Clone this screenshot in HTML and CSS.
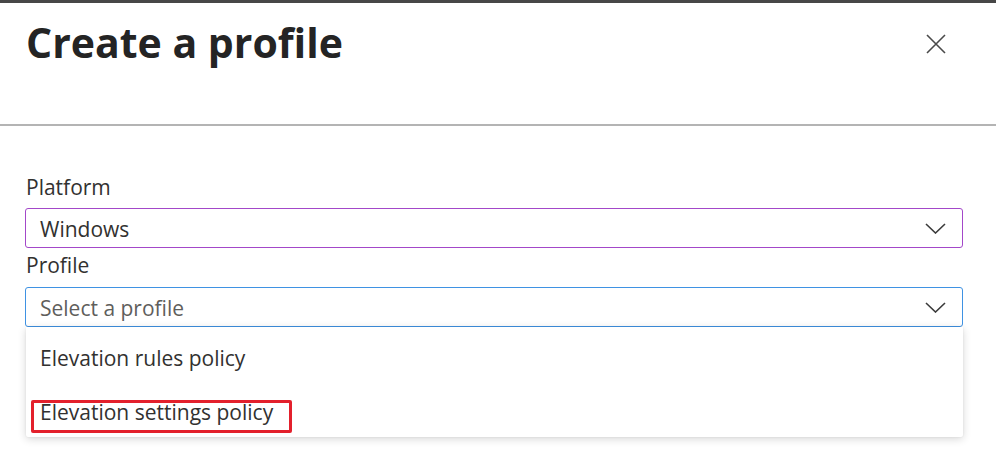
FILE: index.html
```html
<!DOCTYPE html>
<html lang="en">
<head>
<meta charset="utf-8">
<title>Create a profile</title>
<link rel="stylesheet" href="styles.css">
</head>
<body>
<div class="topbar"></div>
<header class="header">
  <h1 class="title">Create a profile</h1>
  <button class="close" aria-label="Close">
    <svg width="20" height="20" viewBox="0 0 20 20"><path d="M1 1 L19 19 M19 1 L1 19" stroke="#4a4a4a" stroke-width="1.6" fill="none"/></svg>
  </button>
</header>
<main class="content">
  <label class="label">Platform</label>
  <div class="select select-platform">
    <span class="value">Windows</span>
    <svg class="chev" width="21" height="11" viewBox="0 0 21 11"><path d="M1 1 L10.5 10 L20 1" stroke="#3b3b3b" stroke-width="1.6" fill="none"/></svg>
  </div>
  <label class="label label-profile">Profile</label>
  <div class="field">
    <div class="select select-profile">
      <span class="value placeholder">Select a profile</span>
      <svg class="chev" width="21" height="11" viewBox="0 0 21 11"><path d="M1 1 L10.5 10 L20 1" stroke="#3b3b3b" stroke-width="1.6" fill="none"/></svg>
    </div>
    <ul class="menu">
      <li class="item">Elevation rules policy</li>
      <li class="item item-marked">Elevation settings policy<span class="mark"></span></li>
    </ul>
  </div>
</main>
</body>
</html>
```
FILE: styles.css
```css
* { box-sizing: border-box; }
html, body { margin: 0; padding: 0; background: #ffffff; }
body {
  font-family: "Open Sans", "Noto Sans", "Liberation Sans", sans-serif;
  color: #323130;
  width: 996px;
  height: 474px;
  overflow: hidden;
}
.topbar { height: 3px; background: #474747; }
.header {
  height: 123px;
  display: flex;
  justify-content: space-between;
  align-items: flex-start;
  padding: 15px 50px 0 26px;
  border-bottom: 2px solid #b4b4b4;
}
.title {
  margin: 0;
  font-size: 41px;
  line-height: 48px;
  font-weight: 700;
  color: #242424;
}
.close {
  margin-top: 16px;
  padding: 0;
  border: 0;
  background: none;
  width: 20px;
  height: 20px;
  display: flex;
}
.content {
  padding: 47px 33px 0 25px;
  display: flex;
  flex-direction: column;
}
.label {
  font-size: 21px;
  line-height: 28px;
  padding-left: 1px;
  margin-bottom: 7px;
  color: #323130;
}
.label-profile { margin-top: 3px; margin-bottom: 8px; }
.select {
  height: 40px;
  border: 1px solid #a347c9;
  border-radius: 3px;
  display: flex;
  align-items: center;
  justify-content: space-between;
  padding: 2px 16px 0 14px;
  font-size: 21px;
}
.select-profile { border-color: #3f92e3; }
.value { line-height: 36px; }
.placeholder { color: #5f5e5c; }
.chev { display: block; margin-top: -2px; }
.field { position: relative; }
.menu {
  list-style: none;
  margin: 0 0 0 1px;
  padding: 4px 0 0 0;
  background: #fff;
  box-shadow: 0 2px 8px rgba(0,0,0,0.16), 0 0 2px rgba(0,0,0,0.08);
  border-radius: 0 0 2px 2px;
}
.item {
  position: relative;
  height: 54px;
  line-height: 54px;
  padding-left: 14px;
  font-size: 21px;
  color: #323130;
}
.menu .item:last-child { height: 52px; }
.mark {
  position: absolute;
  left: 5px;
  top: 15px;
  width: 261px;
  height: 33px;
  border: 3px solid #e3202c;
  border-radius: 2px;
}
```
